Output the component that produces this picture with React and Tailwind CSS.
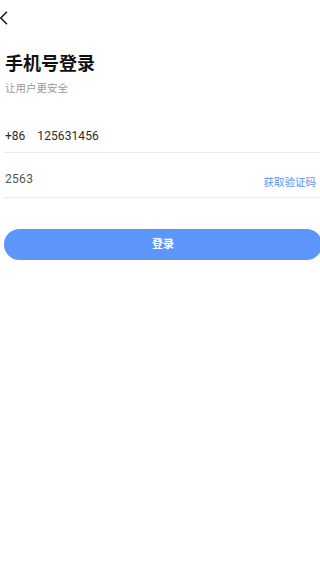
export default function App() {
  const font = { fontFamily: "Roboto, 'Noto Sans CJK SC', sans-serif" };
  return (
    <div className="w-[320px] h-[565px] bg-white overflow-hidden relative" style={font}>
      <div className="h-[36px] pt-[11px]">
        <svg width="8" height="14" viewBox="0 0 8 14" className="block">
          <path d="M7 0.8 L0.8 7 L7 13.2" fill="none" stroke="#111" strokeWidth="1.4" />
        </svg>
      </div>
      <div className="w-[318px] ml-[4px]">
        <div className="pl-[1px] mt-[16px] text-[18px] leading-[24px] font-bold text-[#111]">手机号登录</div>
        <div className="pl-[1px] mt-[5px] text-[10.5px] leading-[16px] text-[#9a9a9a]">让用户更安全</div>
        <div className="pt-[31px] pb-[8px] border-b border-[#ececec] flex items-center text-[12px] leading-[16px] text-[#2a2a2a] pl-[1px]">
          <span>+86</span>
          <span className="ml-[12px] tracking-[0.1px]">125631456</span>
        </div>
        <div className="pt-[18px] pb-[9px] border-b border-[#ececec] flex items-baseline justify-between text-[12px] leading-[16px] pl-[1px]">
          <span className="text-[#555] tracking-[0.3px]">2563</span>
          <span className="text-[10.5px] text-[#5b93f5] mr-[6px] relative top-[3px]">获取验证码</span>
        </div>
        <div className="mt-[31px] h-[31px] rounded-full bg-[#5c96fb] flex items-center justify-center text-white text-[11px] font-bold pt-[2px]">
          登录
        </div>
      </div>
    </div>
  );
}
